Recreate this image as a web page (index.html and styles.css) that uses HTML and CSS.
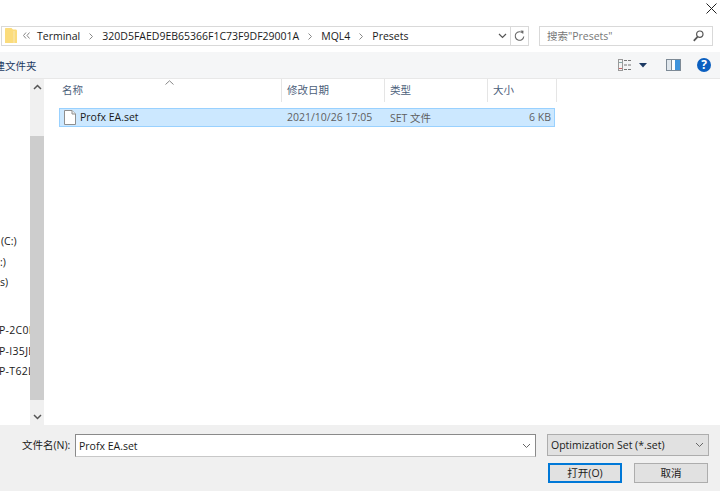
FILE: index.html
```html
<!DOCTYPE html>
<html lang="en">
<head>
    <meta charset="UTF-8">
    <meta name="viewport" content="width=device-width, initial-scale=1.0">
    <title>打开</title>
    <link rel="stylesheet" href="styles.css">
</head>
<body>
    <div class="title-bar">
        <svg class="close-icon" width="11" height="11" viewBox="0 0 11 11"><path d="M0.5 0.5L10.5 10.5M10.5 0.5L0.5 10.5" stroke="#222" stroke-width="1" fill="none"/></svg>
    </div>
    <div class="address-row">
        <div class="address-box">
            <svg class="folder-icon" width="12" height="15" viewBox="0 0 12 15"><path d="M0 1C0 0.400 0.400 0 1 0H6.500L8 1.500H10.500C11.500 1.500 12 2 12 3V15H0Z" fill="#fbdc7c"/><path d="M9 3V15" stroke="#f8e9b8"/></svg>
            <svg class="crumb-more" width="7" height="7" viewBox="0 0 7 7"><path d="M3 0.500L0.500 3.500L3 6.500M6.500 0.500L4 3.500L6.500 6.500" stroke="#888" fill="none"/></svg>
            <span class="crumb">Terminal</span>
            <span class="crumb-sep"><svg width="4" height="7" viewBox="0 0 4 7"><path d="M0.500 0.500L3.500 3.500L0.500 6.500" stroke="#888" fill="none"/></svg></span>
            <span class="crumb">320D5FAED9EB65366F1C73F9DF29001A</span>
            <span class="crumb-sep"><svg width="4" height="7" viewBox="0 0 4 7"><path d="M0.500 0.500L3.500 3.500L0.500 6.500" stroke="#888" fill="none"/></svg></span>
            <span class="crumb">MQL4</span>
            <span class="crumb-sep"><svg width="4" height="7" viewBox="0 0 4 7"><path d="M0.500 0.500L3.500 3.500L0.500 6.500" stroke="#888" fill="none"/></svg></span>
            <span class="crumb">Presets</span>
            <svg class="address-chevron" width="9" height="6" viewBox="0 0 9 6"><path d="M1 1L4.500 4.500L8 1" stroke="#555" stroke-width="1.200" fill="none"/></svg>
        </div>
        <div class="refresh-box">
            <svg width="11" height="12" viewBox="0 0 11 12"><path d="M8.800 3.200A4.300 4.300 0 1 0 9.800 6.500" stroke="#666" stroke-width="1.100" fill="none"/><path d="M6.500 0.500L9.500 0.800L9.200 3.900Z" fill="#666"/></svg>
        </div>
        <div class="search-box">
            <span class="search-text">搜索"Presets"</span>
            <svg width="11" height="12" viewBox="0 0 11 12"><circle cx="6.800" cy="4.200" r="3.200" stroke="#555" stroke-width="1.200" fill="none"/><path d="M4.500 6.800L0.800 10.800" stroke="#555" stroke-width="1.700"/></svg>
        </div>
    </div>
    <div class="toolbar">
        <span class="new-folder">新建文件夹</span>
        <div class="toolbar-icons">
            <svg class="view-icon" width="14" height="12" viewBox="0 0 14 12"><rect x="0.500" y="0.500" width="4" height="11" fill="#f4f4f4" stroke="#999"/><path d="M1 3.500H4" stroke="#8aa"/><path d="M1 9.500H4" stroke="#c66"/><path d="M6 1.500H14M6 6H14M6 10.500H14" stroke="#777" stroke-dasharray="3 1"/></svg>
            <svg class="view-arrow" width="9" height="5" viewBox="0 0 9 5"><path d="M0 0H8L4 4.500Z" fill="#1c3a63"/></svg>
            <svg class="pane-icon" width="15" height="12" viewBox="0 0 15 12"><rect x="0.500" y="0.500" width="14" height="11" fill="#fff" stroke="#7d8a96"/><rect x="1" y="1" width="4" height="10" fill="#dfe6ec"/><rect x="9" y="1" width="5" height="10" fill="#3f94dc"/><path d="M5.500 1V11" stroke="#7d8a96"/></svg>
            <span class="help-icon">?</span>
        </div>
    </div>
    <div class="main">
        <div class="nav-pane">
            <div class="nav-list">
                <div class="nav-item nav-drive">(C:)</div>
                <div class="nav-item nav-drive nav-cut">:)</div>
                <div class="nav-item nav-drive nav-cut">s)</div>
                <div class="nav-gap"></div>
                <div class="nav-item nav-host">P-2C0E</div>
                <div class="nav-item nav-host">P-I35JE</div>
                <div class="nav-item nav-host">P-T62L</div>
            </div>
        </div>
        <div class="scrollbar">
            <svg class="scroll-arrow" width="9" height="6" viewBox="0 0 9 6"><path d="M1 5L4.500 1.500L8 5" stroke="#555" stroke-width="1.500" fill="none"/></svg>
            <div class="scroll-thumb"></div>
            <svg class="scroll-arrow" width="9" height="6" viewBox="0 0 9 6"><path d="M1 1L4.500 4.500L8 1" stroke="#555" stroke-width="1.500" fill="none"/></svg>
        </div>
        <div class="file-pane">
            <svg class="sort-arrow" width="9" height="5" viewBox="0 0 9 5"><path d="M0.500 4.500L4.500 0.800L8.500 4.500" stroke="#888" fill="none"/></svg>
            <div class="file-header">
                <div class="col col-name">名称</div>
                <div class="col col-date">修改日期</div>
                <div class="col col-type">类型</div>
                <div class="col col-size">大小</div>
            </div>
            <div class="file-row">
                <div class="cell-name">
                    <svg width="12" height="15" viewBox="0 0 12 15"><path d="M0.500 0.500H8L11.500 4V14.500H0.500Z" fill="#fff" stroke="#8f8f8f"/><path d="M8 0.500V4H11.500" fill="#eee" stroke="#8f8f8f"/></svg>
                    <span>Profx EA.set</span>
                </div>
                <div class="cell-date">2021/10/26 17:05</div>
                <div class="cell-type">SET 文件</div>
                <div class="cell-size">6 KB</div>
            </div>
        </div>
    </div>
    <div class="footer">
        <div class="footer-row">
            <label class="file-label">文件名(N):</label>
            <div class="file-input">
                <span>Profx EA.set</span>
                <svg width="9" height="6" viewBox="0 0 9 6"><path d="M1 1L4.500 4.500L8 1" stroke="#666" fill="none"/></svg>
            </div>
            <div class="file-type">
                <span>Optimization Set (*.set)</span>
                <svg width="9" height="6" viewBox="0 0 9 6"><path d="M1 1L4.500 4.500L8 1" stroke="#666" fill="none"/></svg>
            </div>
        </div>
        <div class="button-row">
            <button class="btn btn-default">打开(O)</button>
            <button class="btn">取消</button>
        </div>
    </div>
</body>
</html>
```

FILE: styles.css
```css
body {
    margin: 0;
    width: 720px;
    height: 491px;
    overflow: hidden;
    background-color: #ffffff;
    font-family: "Open Sans", "Noto Sans CJK SC", sans-serif;
    font-size: 10.5px;
    color: #1a1a1a;
}
.title-bar {
    height: 26px;
    display: flex;
    justify-content: flex-end;
    padding: 3px 3px 0 0;
    box-sizing: border-box;
}
.close-icon {
    display: block;
}
.address-row {
    height: 26px;
    display: flex;
    padding-left: 1px;
    box-sizing: border-box;
}
.address-box {
    width: 510px;
    height: 20px;
    box-sizing: border-box;
    border: 1px solid #d9d9d9;
    display: flex;
    align-items: center;
    padding: 0 0 1px 3px;
}
.folder-icon {
    margin-right: 6px;
}
.crumb-more {
    margin-right: 7px;
}
.crumb-sep {
    width: 22px;
    display: flex;
    justify-content: center;
    padding-top: 1px;
}
.address-chevron {
    margin-left: auto;
    margin-right: 3px;
}
.refresh-box {
    width: 18px;
    height: 20px;
    box-sizing: border-box;
    border: 1px solid #d9d9d9;
    border-left-width: 0;
    display: flex;
    align-items: center;
    justify-content: center;
}
.search-box {
    width: 174px;
    height: 20px;
    margin-left: 10px;
    box-sizing: border-box;
    border: 1px solid #d9d9d9;
    display: flex;
    align-items: center;
    justify-content: space-between;
    padding: 0 8px 1px 7px;
    color: #777;
}
.toolbar {
    height: 27px;
    background-color: #f5f6f7;
    border-bottom: 1px solid #e8e8e8;
    display: flex;
    align-items: center;
    justify-content: space-between;
    box-sizing: border-box;
    overflow: hidden;
}
.new-folder {
    color: #1c3a63;
    margin-left: -16px;
}
.toolbar-icons {
    display: flex;
    align-items: center;
}
.view-icon {
    margin-right: 7px;
}
.view-arrow {
    margin-right: 18px;
}
.pane-icon {
    margin-right: 16px;
}
.help-icon {
    width: 14px;
    height: 14px;
    border-radius: 50%;
    background-color: #0b5fc0;
    color: #ffffff;
    font-weight: 700;
    font-size: 12px;
    line-height: 14px;
    text-align: center;
    margin-right: 9px;
}
.main {
    height: 346px;
    display: flex;
}
.nav-pane {
    width: 30px;
    overflow: hidden;
}
.nav-list {
    padding-top: 152px;
}
.nav-item {
    height: 20.7px;
    line-height: 20.7px;
    white-space: nowrap;
}
.nav-drive {
    padding-left: 1px;
}
.nav-cut {
    margin-left: -1px;
}
.nav-gap {
    height: 27px;
}
.nav-host {
    margin-left: -1px;
    letter-spacing: 0.3px;
}
.scrollbar {
    width: 14px;
    background-color: #f0f0f0;
    display: flex;
    flex-direction: column;
    align-items: center;
    padding: 5px 0;
    box-sizing: border-box;
}
.scroll-thumb {
    width: 14px;
    height: 264px;
    margin: 46px 0 auto;
    background-color: #cdcdcd;
}
.file-pane {
    flex: 1;
    position: relative;
    padding-left: 15px;
}
.sort-arrow {
    position: absolute;
    left: 121px;
    top: 1px;
}
.file-header {
    display: flex;
    height: 23px;
    color: #4c607a;
    margin-bottom: 6px;
}
.col {
    box-sizing: border-box;
    border-right: 1px solid #e5e5e5;
    padding-left: 3px;
    line-height: 23px;
}
.col-name {
    width: 223px;
}
.col-date {
    width: 103px;
    padding-left: 5px;
}
.col-type {
    width: 103px;
    padding-left: 5px;
}
.col-size {
    width: 69px;
    padding-left: 5px;
}
.file-row {
    width: 496px;
    height: 19px;
    box-sizing: border-box;
    background-color: #cce8ff;
    border: 1px solid #99d1ff;
    padding-bottom: 1px;
    display: flex;
    align-items: center;
}
.cell-name {
    width: 227px;
    display: flex;
    align-items: center;
    gap: 4px;
    padding-left: 4px;
    box-sizing: border-box;
}
.cell-date {
    width: 103px;
    color: #5f5f5f;
}
.cell-type {
    width: 90px;
    color: #5f5f5f;
}
.cell-size {
    width: 71px;
    text-align: right;
    color: #5f5f5f;
}
.footer {
    height: 66px;
    background-color: #f0f0f0;
    padding-top: 9px;
    box-sizing: border-box;
}
.footer-row {
    display: flex;
    align-items: flex-start;
}
.file-label {
    width: 75px;
    box-sizing: border-box;
    padding-left: 22px;
    line-height: 23px;
    white-space: nowrap;
}
.file-input {
    width: 461px;
    height: 23px;
    box-sizing: border-box;
    background-color: #ffffff;
    border: 1px solid #8a8a8a;
    border-bottom-color: #c8c8c8;
    display: flex;
    align-items: center;
    justify-content: space-between;
    padding: 0 4px 0 3px;
}
.file-type {
    width: 162px;
    height: 22px;
    margin-left: 11px;
    box-sizing: border-box;
    background-color: #e1e1e1;
    border: 1px solid #adadad;
    display: flex;
    align-items: center;
    justify-content: space-between;
    padding: 0 4px 1px 3px;
}
.button-row {
    display: flex;
    justify-content: flex-end;
    gap: 12px;
    margin-top: 6px;
    padding-right: 12px;
}
.btn {
    width: 74px;
    height: 20px;
    padding: 0 0 1px;
    box-sizing: border-box;
    background-color: #e1e1e1;
    border: 1px solid #adadad;
    font-family: inherit;
    font-size: 10.5px;
    color: #1a1a1a;
}
.btn-default {
    border: 2px solid #0078d7;
}
```
